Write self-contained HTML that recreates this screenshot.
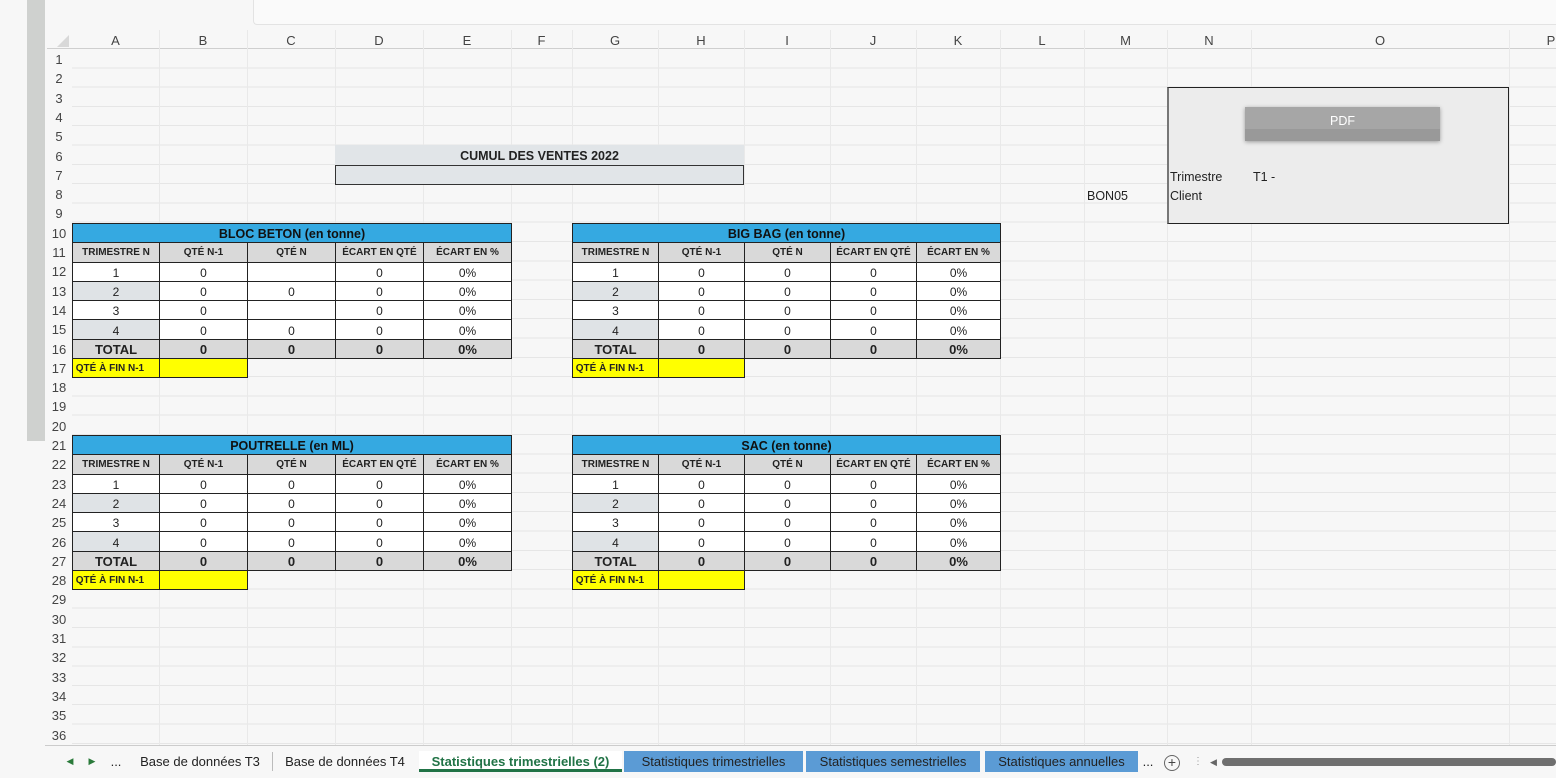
<!DOCTYPE html>
<html><head><meta charset="utf-8"><style>
*{margin:0;padding:0;box-sizing:border-box}
body{width:1556px;height:778px;overflow:hidden;background:#f7f7f7;font-family:"Liberation Sans",Arial,sans-serif;position:relative;color:#222}
.abs{position:absolute}
#grid{position:absolute;left:72px;top:49px;width:1484px;height:697px;background:repeating-linear-gradient(to bottom,transparent 0,transparent 18.3px,#e6e6e6 18.3px,#e6e6e6 19.3px)}
.vl{position:absolute;top:30px;width:1px;height:716px;background:#e9e9e9}
.ch{position:absolute;top:31px;height:19px;line-height:19px;text-align:center;font-size:13px;color:#444}
.rh{position:absolute;left:47px;width:24px;text-align:center;font-size:13px;color:#444;height:19.3px;line-height:21px}
table.t{position:absolute;border-collapse:collapse;table-layout:fixed;font-size:12px;text-align:center}
table.t td{height:19.3px;border:1px solid #222;padding:0;padding-top:2px;line-height:16px;white-space:nowrap;overflow:hidden}
.bl{background:#35a9e1;font-weight:bold;font-size:12.5px;color:#111}
.hd td{background:#d9d9d9;font-weight:bold;font-size:10px}
.tot td{background:#d9d9d9;font-weight:bold;font-size:13px}
.g{background:#dfe3e6}
.w{background:#fff}
.y{background:#ffff00;font-weight:bold;font-size:10px;text-align:left}
.noB{border:none!important;background:transparent!important}
.tab{position:absolute;top:751px;height:21px;line-height:21px;font-size:13px;text-align:center;color:#222}
</style></head><body>
<div class="abs" style="left:27px;top:0;width:18px;height:441px;background:#cfd1cf"></div>
<div class="abs" style="left:253px;top:0;width:1310px;height:25px;background:#fafafa;border-left:1px solid #e3e3e3;border-bottom:1px solid #e3e3e3;border-bottom-left-radius:4px"></div>
<div id="grid"></div>
<div class="abs" style="left:47px;top:48px;width:1509px;height:1px;background:#cfcfcf"></div>
<div class="abs" style="left:57px;top:35px;width:0;height:0;border-left:12px solid transparent;border-bottom:12px solid #d8d8d8"></div>
<div class="vl" style="left:159px"></div><div class="vl" style="left:247px"></div><div class="vl" style="left:335px"></div><div class="vl" style="left:423px"></div><div class="vl" style="left:511px"></div><div class="vl" style="left:572px"></div><div class="vl" style="left:658px"></div><div class="vl" style="left:744px"></div><div class="vl" style="left:830px"></div><div class="vl" style="left:916px"></div><div class="vl" style="left:1000px"></div><div class="vl" style="left:1084px"></div><div class="vl" style="left:1167px"></div><div class="vl" style="left:1251px"></div><div class="vl" style="left:1509px"></div>
<div class="ch" style="left:72px;width:87px">A</div><div class="ch" style="left:159px;width:88px">B</div><div class="ch" style="left:247px;width:88px">C</div><div class="ch" style="left:335px;width:88px">D</div><div class="ch" style="left:423px;width:88px">E</div><div class="ch" style="left:511px;width:61px">F</div><div class="ch" style="left:572px;width:86px">G</div><div class="ch" style="left:658px;width:86px">H</div><div class="ch" style="left:744px;width:86px">I</div><div class="ch" style="left:830px;width:86px">J</div><div class="ch" style="left:916px;width:84px">K</div><div class="ch" style="left:1000px;width:84px">L</div><div class="ch" style="left:1084px;width:83px">M</div><div class="ch" style="left:1167px;width:84px">N</div><div class="ch" style="left:1251px;width:258px">O</div><div class="ch" style="left:1509px;width:84px">P</div>
<div class="rh" style="top:49px">1</div><div class="rh" style="top:68.3px">2</div><div class="rh" style="top:87.6px">3</div><div class="rh" style="top:106.9px">4</div><div class="rh" style="top:126.2px">5</div><div class="rh" style="top:145.5px">6</div><div class="rh" style="top:164.8px">7</div><div class="rh" style="top:184.1px">8</div><div class="rh" style="top:203.4px">9</div><div class="rh" style="top:222.7px">10</div><div class="rh" style="top:242px">11</div><div class="rh" style="top:261.3px">12</div><div class="rh" style="top:280.6px">13</div><div class="rh" style="top:299.9px">14</div><div class="rh" style="top:319.2px">15</div><div class="rh" style="top:338.5px">16</div><div class="rh" style="top:357.8px">17</div><div class="rh" style="top:377.1px">18</div><div class="rh" style="top:396.4px">19</div><div class="rh" style="top:415.7px">20</div><div class="rh" style="top:435px">21</div><div class="rh" style="top:454.3px">22</div><div class="rh" style="top:473.6px">23</div><div class="rh" style="top:492.9px">24</div><div class="rh" style="top:512.2px">25</div><div class="rh" style="top:531.5px">26</div><div class="rh" style="top:550.8px">27</div><div class="rh" style="top:570.1px">28</div><div class="rh" style="top:589.4px">29</div><div class="rh" style="top:608.7px">30</div><div class="rh" style="top:628px">31</div><div class="rh" style="top:647.3px">32</div><div class="rh" style="top:666.6px">33</div><div class="rh" style="top:685.9px">34</div><div class="rh" style="top:705.2px">35</div><div class="rh" style="top:724.5px">36</div>

<div class="abs" style="left:335px;top:145px;width:409px;height:20px;background:#e1e5e8;text-align:center;font-weight:bold;font-size:12.5px;line-height:22px">CUMUL DES VENTES 2022</div>
<div class="abs" style="left:335px;top:165px;width:409px;height:20px;background:#e1e5e8;border:1px solid #333"></div>

<table class="t" style="left:72px;top:223px;width:439px">
<colgroup><col style="width:87px"><col style="width:88px"><col style="width:88px"><col style="width:88px"><col style="width:88px"></colgroup>
<tr><td class="bl" colspan="5">BLOC BETON (en tonne)</td></tr>
<tr class="hd"><td>TRIMESTRE N</td><td>QTÉ N-1</td><td>QTÉ N</td><td>ÉCART EN QTÉ</td><td>ÉCART EN %</td></tr>
<tr class="w"><td>1</td><td>0</td><td></td><td>0</td><td>0%</td></tr>
<tr class="w"><td class="g">2</td><td>0</td><td>0</td><td>0</td><td>0%</td></tr>
<tr class="w"><td>3</td><td>0</td><td></td><td>0</td><td>0%</td></tr>
<tr class="w"><td class="g">4</td><td>0</td><td>0</td><td>0</td><td>0%</td></tr>
<tr class="tot"><td>TOTAL</td><td>0</td><td>0</td><td>0</td><td>0%</td></tr>
<tr><td class="y">&nbsp;QTÉ À FIN N-1</td><td class="y"></td><td class="noB"></td><td class="noB"></td><td class="noB"></td></tr>
</table>

<table class="t" style="left:572px;top:223px;width:428px">
<colgroup><col style="width:86px"><col style="width:86px"><col style="width:86px"><col style="width:86px"><col style="width:84px"></colgroup>
<tr><td class="bl" colspan="5">BIG BAG (en tonne)</td></tr>
<tr class="hd"><td>TRIMESTRE N</td><td>QTÉ N-1</td><td>QTÉ N</td><td>ÉCART EN QTÉ</td><td>ÉCART EN %</td></tr>
<tr class="w"><td>1</td><td>0</td><td>0</td><td>0</td><td>0%</td></tr>
<tr class="w"><td class="g">2</td><td>0</td><td>0</td><td>0</td><td>0%</td></tr>
<tr class="w"><td>3</td><td>0</td><td>0</td><td>0</td><td>0%</td></tr>
<tr class="w"><td class="g">4</td><td>0</td><td>0</td><td>0</td><td>0%</td></tr>
<tr class="tot"><td>TOTAL</td><td>0</td><td>0</td><td>0</td><td>0%</td></tr>
<tr><td class="y">&nbsp;QTÉ À FIN N-1</td><td class="y"></td><td class="noB"></td><td class="noB"></td><td class="noB"></td></tr>
</table>

<table class="t" style="left:72px;top:435px;width:439px">
<colgroup><col style="width:87px"><col style="width:88px"><col style="width:88px"><col style="width:88px"><col style="width:88px"></colgroup>
<tr><td class="bl" colspan="5">POUTRELLE (en ML)</td></tr>
<tr class="hd"><td>TRIMESTRE N</td><td>QTÉ N-1</td><td>QTÉ N</td><td>ÉCART EN QTÉ</td><td>ÉCART EN %</td></tr>
<tr class="w"><td>1</td><td>0</td><td>0</td><td>0</td><td>0%</td></tr>
<tr class="w"><td class="g">2</td><td>0</td><td>0</td><td>0</td><td>0%</td></tr>
<tr class="w"><td>3</td><td>0</td><td>0</td><td>0</td><td>0%</td></tr>
<tr class="w"><td class="g">4</td><td>0</td><td>0</td><td>0</td><td>0%</td></tr>
<tr class="tot"><td>TOTAL</td><td>0</td><td>0</td><td>0</td><td>0%</td></tr>
<tr><td class="y">&nbsp;QTÉ À FIN N-1</td><td class="y"></td><td class="noB"></td><td class="noB"></td><td class="noB"></td></tr>
</table>

<table class="t" style="left:572px;top:435px;width:428px">
<colgroup><col style="width:86px"><col style="width:86px"><col style="width:86px"><col style="width:86px"><col style="width:84px"></colgroup>
<tr><td class="bl" colspan="5">SAC (en tonne)</td></tr>
<tr class="hd"><td>TRIMESTRE N</td><td>QTÉ N-1</td><td>QTÉ N</td><td>ÉCART EN QTÉ</td><td>ÉCART EN %</td></tr>
<tr class="w"><td>1</td><td>0</td><td>0</td><td>0</td><td>0%</td></tr>
<tr class="w"><td class="g">2</td><td>0</td><td>0</td><td>0</td><td>0%</td></tr>
<tr class="w"><td>3</td><td>0</td><td>0</td><td>0</td><td>0%</td></tr>
<tr class="w"><td class="g">4</td><td>0</td><td>0</td><td>0</td><td>0%</td></tr>
<tr class="tot"><td>TOTAL</td><td>0</td><td>0</td><td>0</td><td>0%</td></tr>
<tr><td class="y">&nbsp;QTÉ À FIN N-1</td><td class="y"></td><td class="noB"></td><td class="noB"></td><td class="noB"></td></tr>
</table>

<div class="abs" style="left:1087px;top:189px;font-size:12.5px">BON05</div>
<div class="abs" style="left:1167px;top:87px;width:342px;height:137px;background:#ececec;border:1px solid #222;border-left:2px solid #777"></div>
<div class="abs" style="left:1245px;top:107px;width:195px;height:34px;background:#a6a6a6;box-shadow:0 1px 4px rgba(0,0,0,.35)"></div>
<div class="abs" style="left:1245px;top:129px;width:195px;height:12px;background:#999"></div>
<div class="abs" style="left:1245px;top:114px;width:195px;text-align:center;color:#fff;font-size:12.5px">PDF</div>
<div class="abs" style="left:1170px;top:170px;font-size:12.5px">Trimestre</div>
<div class="abs" style="left:1253px;top:170px;font-size:12.5px">T1 -</div>
<div class="abs" style="left:1170px;top:189px;font-size:12.5px">Client</div>

<div class="abs" style="left:0;top:746px;width:1556px;height:32px;background:#f7f7f7"></div>
<div class="abs" style="left:45px;top:745px;width:1511px;height:1px;background:#ccc"></div>
<div class="tab" style="left:64px;width:12px;color:#2a7a3a;font-size:9px">◀</div>
<div class="tab" style="left:86px;width:12px;color:#2a7a3a;font-size:9px">▶</div>
<div class="tab" style="left:106px;width:20px">...</div>
<div class="tab" style="left:133px;width:134px">Base de données T3</div>
<div class="abs" style="left:272px;top:752px;width:1px;height:19px;background:#bbb"></div>
<div class="tab" style="left:278px;width:134px">Base de données T4</div>
<div class="tab" style="left:419px;width:203px;background:#fff;color:#217346;font-weight:bold;border-bottom:3px solid #217346">Statistiques trimestrielles (2)</div>
<div class="tab" style="left:624px;width:179px;background:#5b9bd5">Statistiques trimestrielles</div>
<div class="tab" style="left:806px;width:174px;background:#5b9bd5">Statistiques semestrielles</div>
<div class="tab" style="left:985px;width:153px;background:#5b9bd5">Statistiques annuelles</div>
<div class="tab" style="left:1140px;width:16px">...</div>
<div class="abs" style="left:1164px;top:755px;width:16px;height:16px;border:1px solid #666;border-radius:50%;text-align:center;line-height:13px;font-size:14px;color:#444">+</div>
<div class="abs" style="left:1193px;top:756px;font-size:10px;color:#999">⋮</div>
<div class="abs" style="left:1210px;top:757px;font-size:9px;color:#666">◀</div>
<div class="abs" style="left:1222px;top:758px;width:334px;height:8px;background:#6f6f6f;border-radius:4px"></div>
</body></html>
